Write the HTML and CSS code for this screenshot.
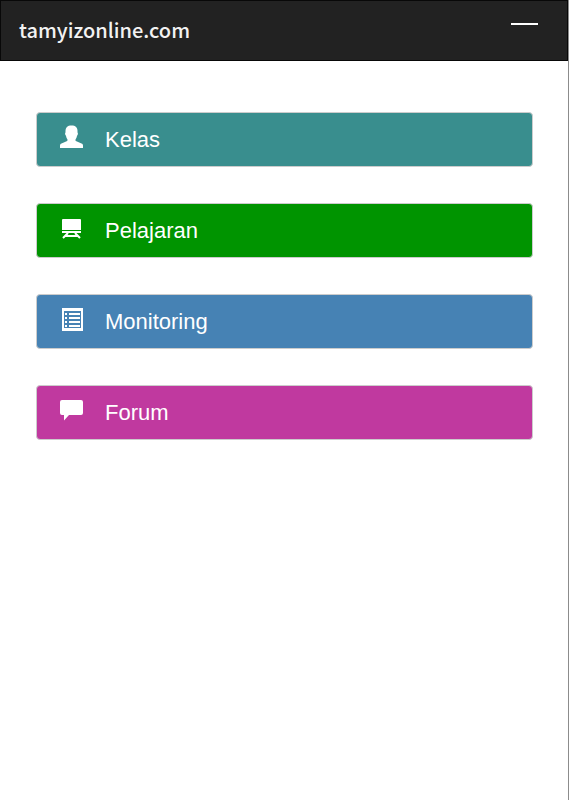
FILE: index.html
```
<!DOCTYPE html>
<html lang="id">
<head>
    <meta charset="UTF-8">
    <meta name="viewport" content="width=device-width, initial-scale=1.0">
    <title>tamyizonline.com</title>
    <link rel="stylesheet" href="styles.css">
</head>
<body>
    <header class="navbar">
        <a class="brand" href="#">tamyizonline.com</a>
        <button class="menu-toggle" type="button" aria-label="Menu">
            <span class="bar"></span>
        </button>
    </header>

    <nav class="menu">
        <a class="menu-item kelas" href="#">
            <svg class="icon" viewBox="0 0 24 24" aria-hidden="true">
                <path d="M12.500 0.500C8.500 0.500 6.500 2.500 6.500 6V7.500C5.800 8 6 10 7 10.700C7.300 12.500 7.900 13.700 8.500 14.500V15.200C8.500 15.700 8.300 16 7.600 16.300L2.500 18.500C1.500 18.900 1 19.700 1 20.700V23H24V20.700C24 19.700 23.500 18.900 22.500 18.500L17.400 16.300C16.700 16 16.500 15.700 16.500 15.200V14.500C17.100 13.700 17.700 12.500 18 10.700C19 10 19.200 8 18.500 7.500V6C18.500 2.500 16.500 0.500 12.500 0.500Z"/>
            </svg>
            Kelas
        </a>
        <a class="menu-item pelajaran" href="#">
            <svg class="icon" viewBox="0 0 24 24" aria-hidden="true">
                <path d="M4 3H21Q22 3 22 4V14H3V4Q3 3 4 3ZM3 15H22V17H3Z"/>
                <path class="line" d="M9 17L4 22M16 17L21 22M7 20H18"/>
            </svg>
            Pelajaran
        </a>
        <a class="menu-item monitoring" href="#">
            <svg class="icon" viewBox="0 0 24 24" aria-hidden="true">
                <path fill-rule="evenodd" d="M3 1H24V24H3ZM5 4V21H22V4Z"/>
                <path d="M6 6H8V8H6ZM10 6H21V8H10ZM6 10H8V12H6ZM10 10H21V12H10ZM6 14H8V16H6ZM10 14H21V16H10ZM6 18H8V20H6ZM10 18H21V20H10Z"/>
            </svg>
            Monitoring
        </a>
        <a class="menu-item forum" href="#">
            <svg class="icon" viewBox="0 0 24 24" aria-hidden="true">
                <path d="M3 2H22Q24 2 24 4V15Q24 17 22 17H10L5 22.500V17H3Q1 17 1 15V4Q1 2 3 2Z"/>
            </svg>
            Forum
        </a>
    </nav>
</body>
</html>
```
FILE: styles.css
```
* {
    box-sizing: border-box;
}

body {
    margin: 0;
    min-height: 100vh;
    border-right: 1px solid #8c8c8c;
    background-color: #fff;
    font-family: "Liberation Sans", Arial, sans-serif;
}

.navbar {
    display: flex;
    justify-content: space-between;
    align-items: flex-start;
    padding: 14px 29px 15px 18px;
    border: 1px solid #080808;
    background-color: #222;
}

.brand {
    color: #f2f2f2;
    font-family: "Noto Sans CJK SC", "Noto Sans", sans-serif;
    font-size: 20px;
    font-weight: 500;
    line-height: 30px;
    text-decoration: none;
}

.menu-toggle {
    padding: 8px 0;
    border: none;
    background: none;
    cursor: pointer;
}

.menu-toggle .bar {
    display: block;
    width: 27px;
    height: 2px;
    background-color: #fff;
}

.menu {
    display: flex;
    flex-direction: column;
    gap: 36px;
    padding: 51px 35px 51px 36px;
}

.menu-item {
    display: flex;
    align-items: center;
    gap: 22px;
    height: 55px;
    padding: 0 22px;
    border: 1px solid #ccc;
    border-radius: 4px;
    color: #fff;
    font-size: 22px;
    text-decoration: none;
}

.icon {
    width: 24px;
    height: 24px;
    margin-bottom: 5px;
    fill: #fff;
}

.icon .line {
    fill: none;
    stroke: #fff;
    stroke-width: 2;
}

.kelas {
    background-color: #398e8e;
}

.pelajaran {
    background-color: #009400;
}

.monitoring {
    background-color: #4682b4;
}

.forum {
    background-color: #c0399f;
}
```
